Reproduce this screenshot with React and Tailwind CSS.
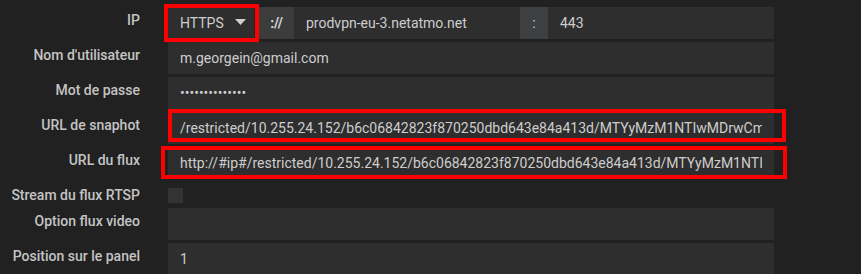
import React from "react";

const font = { fontFamily: "Roboto, 'Liberation Sans', sans-serif" };

function Label({ children }) {
  return (
    <div className="w-[140px] shrink-0 text-right text-[14px] leading-5 pt-[3px] font-medium text-[#c4c4c4]">
      {children}
    </div>
  );
}

function TextInput({ value, type = "text" }) {
  return (
    <input
      readOnly
      type={type}
      value={value}
      className="h-8 w-[606px] bg-[#2e2e2e] px-3 text-[14px] text-[#cdcdcd] outline-none border-0"
      style={font}
    />
  );
}

function Row({ label, children, h = "h-8" }) {
  return (
    <div className={`flex ${h}`}>
      <Label>{label}</Label>
      <div className="ml-[28px] flex">{children}</div>
    </div>
  );
}

export default function App() {
  return (
    <div
      className="relative w-[861px] h-[274px] overflow-hidden bg-[#212121] pt-[7px] flex flex-col gap-[3px]"
      style={font}
    >
      <Row label="IP">
        <div className="flex h-8 w-[606px]">
          <div className="relative flex h-8 w-[86px] items-center bg-[#2e2e2e] pl-3 text-[14px] text-[#cdcdcd]">
            HTTPS
            <svg className="absolute left-[67px] top-[12px]" width="11" height="6" viewBox="0 0 11 6">
              <path d="M0 0 L11 0 L5.5 6 Z" fill="#cfcfcf" />
            </svg>
          </div>
          <div className="w-[5px] bg-[#222222]" />
          <div className="flex h-8 w-[35px] items-center justify-center bg-[#3c3c3c] text-[14px] font-bold text-[#d6d6d6]">
            ://
          </div>
          <input
            readOnly
            value="prodvpn-eu-3.netatmo.net"
            className="h-8 w-[226px] bg-[#2e2e2e] px-3 text-[14px] text-[#cdcdcd] outline-none border-0"
            style={font}
          />
          <div className="flex h-8 w-[28px] items-center justify-center bg-[#3e3f41] text-[14px] text-[#d0d0d0]">
            :
          </div>
          <input
            readOnly
            value="443"
            className="h-8 w-[226px] bg-[#2e2e2e] px-3 text-[14px] text-[#cdcdcd] outline-none border-0"
            style={font}
          />
        </div>
      </Row>
      <Row label="Nom d'utilisateur">
        <TextInput value="m.georgein@gmail.com" />
      </Row>
      <Row label="Mot de passe">
        <TextInput type="password" value="abcdefghijklmn" />
      </Row>
      <Row label="URL de snaphot">
        <TextInput value="/restricted/10.255.24.152/b6c06842823f870250dbd643e84a413d/MTYyMzM1NTIwMDrwCmIzZjE" />
      </Row>
      <Row label="URL du flux">
        <TextInput value="http://#ip#/restricted/10.255.24.152/b6c06842823f870250dbd643e84a413d/MTYyMzM1NTIwMDrwCm" />
      </Row>
      <Row label="Stream du flux RTSP" h="h-[26px]">
        <div className="mt-[6px] h-[15px] w-[15px] bg-[#333333]" />
      </Row>
      <Row label="Option flux video">
        <TextInput value="" />
      </Row>
      <Row label="Position sur le panel">
        <TextInput value="1" />
      </Row>

      <div className="absolute left-[164px] top-[4px] w-[95px] h-[38px] border-4 border-[#ff0000]" />
      <div className="absolute left-[168px] top-[109px] w-[618px] h-[33px] border-4 border-[#ff0000]" />
      <div className="absolute left-[161px] top-[146px] w-[626px] h-[33px] border-4 border-[#ff0000]" />
    </div>
  );
}
